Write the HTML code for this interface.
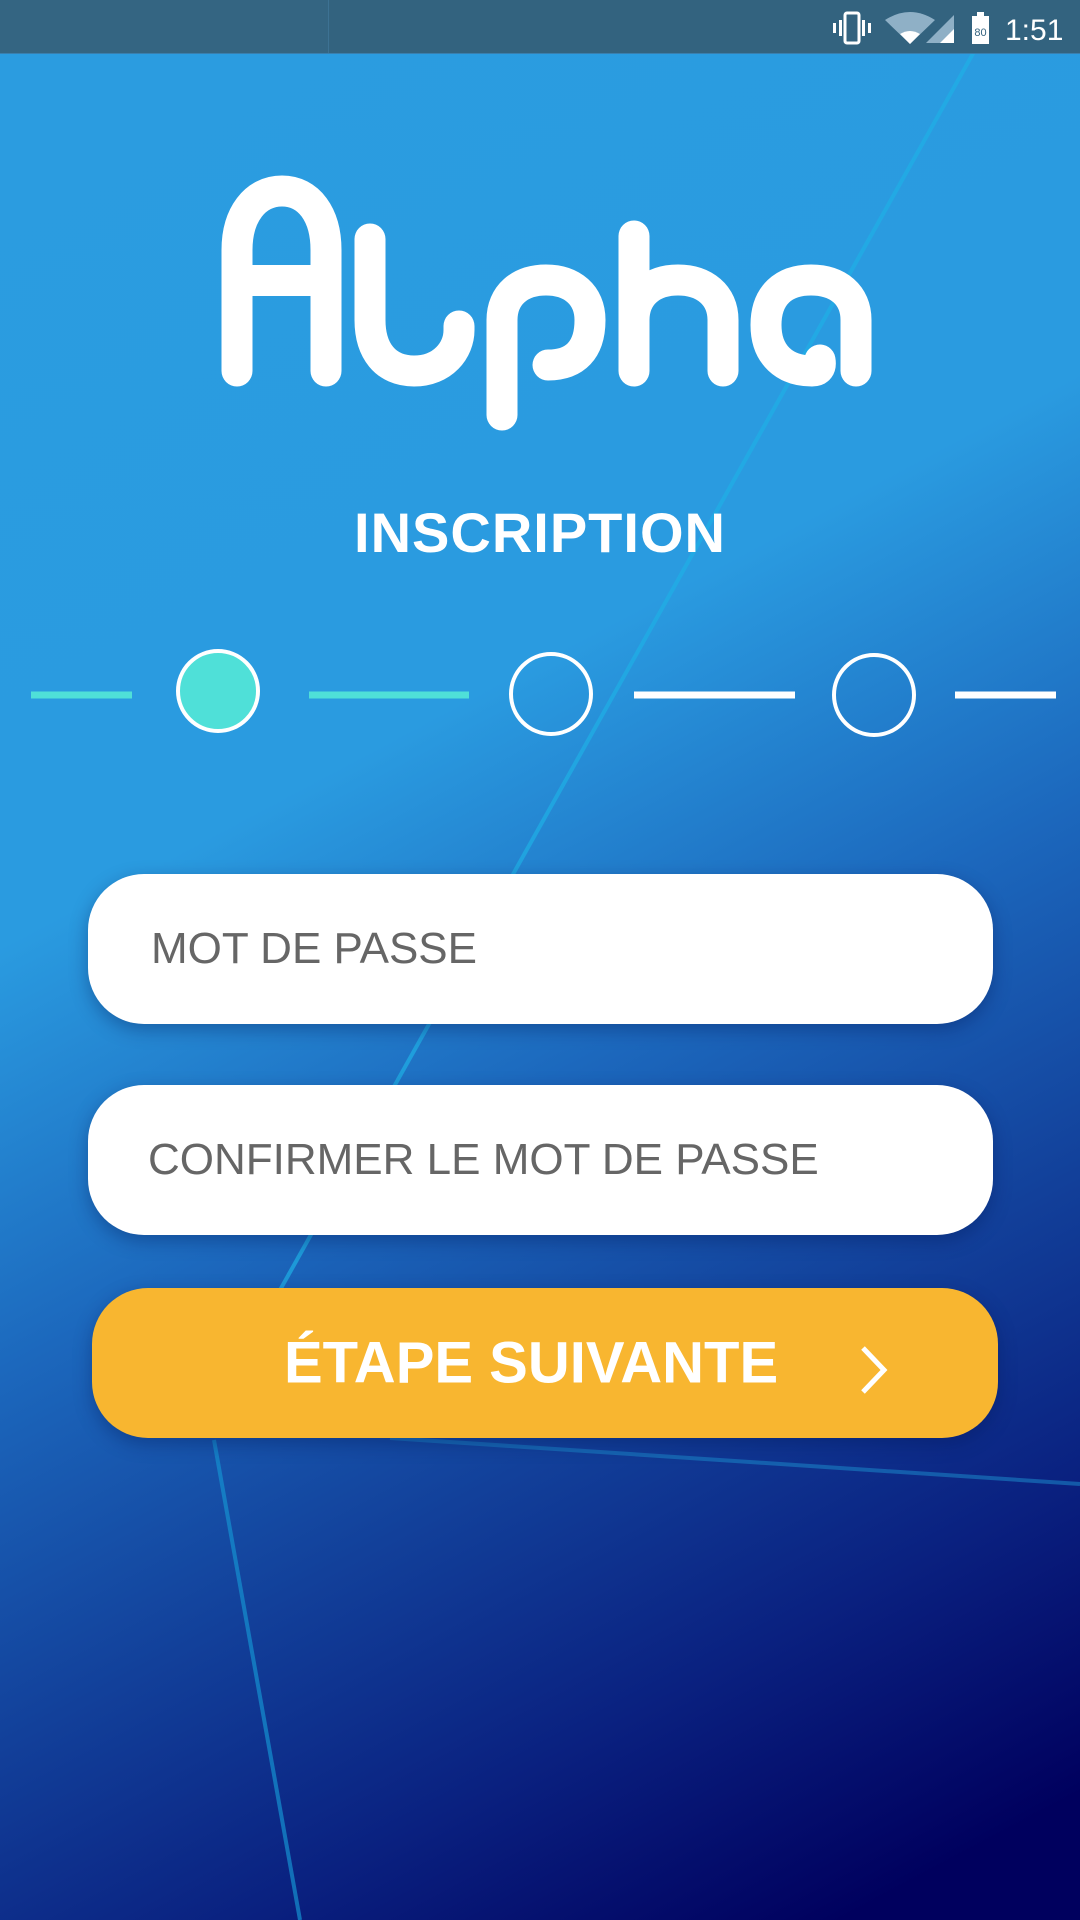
<!DOCTYPE html>
<html><head><meta charset="utf-8"><style>
html,body{margin:0;padding:0}
body{width:1080px;height:1920px;position:relative;overflow:hidden;font-family:"Liberation Sans",sans-serif;
background:linear-gradient(152deg,#2b9ce0 0%,#2a9be0 38%,#1c68bd 55%,#12409a 70%,#0a2180 82%,#00005e 95%)}
.abs{position:absolute}
.sb{left:0;top:0;width:1080px;height:53px;background:#33637f;border-bottom:1px solid #3a7fae}
.sb .l{position:absolute;left:0;top:0;width:328px;height:53px;background:#346582;border-right:1px solid #3d7293}
.title{top:500px;left:0;width:1080px;text-align:center;color:#fff;font-weight:bold;font-size:56px;letter-spacing:1px}
.field{left:88px;width:905px;height:150px;border-radius:56px;background:#fff;box-shadow:0 6px 18px rgba(0,20,80,.35)}
.field span{position:absolute;top:50%;transform:translateY(-50%);color:#666;font-size:44px}
.btn{left:92px;top:1288px;width:906px;height:150px;border-radius:56px;background:#f8b630;box-shadow:0 6px 18px rgba(0,20,80,.35)}
.btn span{position:absolute;left:192px;top:50%;transform:translateY(-50%);color:#fff;font-weight:bold;font-size:58px}
</style></head><body>
<svg class="abs" style="left:0;top:0" width="1080" height="1920">
<line x1="975" y1="50" x2="280" y2="1290" stroke="#1fb0e6" stroke-width="4" opacity=".7"/>
<line x1="214" y1="1440" x2="300" y2="1920" stroke="#1590d0" stroke-width="4" opacity=".7"/>
<line x1="390" y1="1438" x2="1080" y2="1484" stroke="#1a7fc4" stroke-width="4" opacity=".6"/>
</svg>
<div class="abs sb"><div class="l"></div>
<svg class="abs" style="left:830px;top:10px" width="250" height="36">
<g fill="#fff"><rect x="15" y="3" width="14" height="30" rx="2" fill="none" stroke="#fff" stroke-width="3"/>
<rect x="9" y="10" width="3" height="16"/><rect x="32" y="10" width="3" height="16"/><rect x="3" y="13" width="3" height="10"/><rect x="38" y="13" width="3" height="10"/>
<path d="M55 10 Q80 -6 105 10 L80 34Z" fill="#8fb0c6"/><path d="M70 24 Q80 18 90 24 L80 34Z"/>
<path d="M124 33 L124 5 L96 33Z" fill="#8fb0c6"/><path d="M110 33 L124 19 L124 33Z"/>
<rect x="142" y="6" width="17" height="28"/><rect x="147" y="2" width="7" height="5"/>
<text x="150.5" y="26" font-size="11" fill="#33637f" text-anchor="middle" font-family="Liberation Sans">80</text>
<text x="175" y="30" font-size="30" fill="#fff" font-family="Liberation Sans">1:51</text></g>
</svg></div>
<svg class="abs" style="left:0;top:0" width="1080" height="460">
<g fill="none" stroke="#fff" stroke-width="31" stroke-linecap="round" stroke-linejoin="round">
<path d="M237,371 V250 C237,215 255,191 282,191 C309,191 326,215 326,250 V371"/>
<path d="M370,239 V320 C370,350 385,371 414,371 C443,371 459,350 459,330 V326"/>
<path d="M502,415 V320 C502,295 520,280 546,280 C572,280 590,295 590,320 C590,350 575,365 548,365"/>
<path d="M634,236 V371 M634,320 C634,295 652,280 678,280 C704,280 723,295 723,320 V371"/>
<path d="M856,371 V320 C856,295 838,280 811,280 C784,280 766,295 766,325 C766,355 785,371 812,371 Q822,371 820,360"/>
</g>
<rect x="237" y="265" width="89" height="31" fill="#fff"/>
</svg>
<div class="abs title">INSCRIPTION</div>
<svg class="abs" style="left:0;top:640px" width="1080" height="110">
<g stroke-width="7"><line x1="31" y1="55" x2="132" y2="55" stroke="#4fe0d8"/>
<line x1="309" y1="55" x2="469" y2="55" stroke="#4fe0d8"/>
<line x1="634" y1="55" x2="795" y2="55" stroke="#fff"/>
<line x1="955" y1="55" x2="1056" y2="55" stroke="#fff"/></g>
<circle cx="218" cy="51" r="40" fill="#4fe0d8" stroke="#fff" stroke-width="4"/>
<circle cx="551" cy="54" r="40" fill="none" stroke="#fff" stroke-width="4"/>
<circle cx="874" cy="55" r="40" fill="none" stroke="#fff" stroke-width="4"/>
</svg>
<div class="abs field" style="top:874px"><span style="left:63px">MOT DE PASSE</span></div>
<div class="abs field" style="top:1085px"><span style="left:60px">CONFIRMER LE MOT DE PASSE</span></div>
<div class="abs btn"><span>ÉTAPE SUIVANTE</span>
<svg class="abs" style="left:764px;top:56px" width="36" height="52"><path d="M7 4 L28 26 L7 48" fill="none" stroke="#fff" stroke-width="5"/></svg></div>
</body></html>
